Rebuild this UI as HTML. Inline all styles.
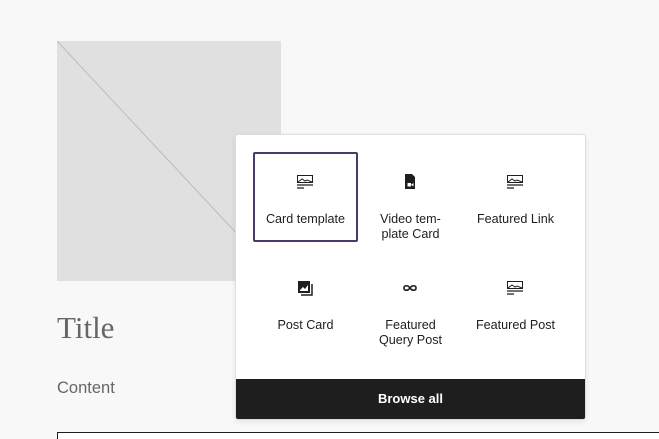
<!DOCTYPE html>
<html style="height:439px;overflow:hidden"><head><style>
body{margin:0;width:659px;height:439px;background:#f8f8f8;position:relative;overflow:hidden;font-family:"Liberation Sans",sans-serif;}
.ph{position:absolute;left:57px;top:41px;width:224px;height:240px;background:#e0e0e0;}
.title{position:absolute;left:57px;top:310px;font-family:"Liberation Serif",serif;font-size:31px;color:#666;}
.content{position:absolute;left:57px;top:379px;font-size:16.5px;color:#666;}
.box{position:absolute;left:57px;top:432px;width:620px;height:20px;border:1px solid #1e1e1e;background:#fff;}
.pop{position:absolute;left:235px;top:134px;width:349px;height:284px;background:#fff;border:1px solid #ddd;border-radius:3px;box-shadow:0 2px 6px rgba(0,0,0,.08);overflow:hidden;}
.cell{position:absolute;width:105px;height:90px;text-align:center;font-size:12.6px;color:#1e1e1e;line-height:15px;box-sizing:border-box;}
.cell svg{position:absolute;left:42px;top:20px;}
.cell span{position:absolute;left:-5px;right:-5px;top:60px;}
.sel{border:2px solid #4d3967;border-radius:2px;}
.bar{position:absolute;left:0;bottom:0;width:100%;height:40px;background:#1e1e1e;color:#fff;font-size:13px;font-weight:bold;text-align:center;line-height:40px;}
</style></head><body>
<div class="ph"><svg width="224" height="240"><line x1="0" y1="0" x2="224" y2="240" stroke="#bbb" stroke-width="1"/></svg></div>
<div class="title">Title</div>
<div class="content">Content</div>
<div class="box"></div>
<div class="pop">
<div class="cell sel" style="left:17px;top:17px"><svg width="20" height="20" viewBox="0 0 20 20" style="left:40px;top:18px"><rect x="2.5" y="3.5" width="15" height="7" fill="none" stroke="#1e1e1e"/><path d="M3 10l4-3 3 2 2-1 5 2" fill="none" stroke="#1e1e1e"/><path d="M2 13h16M2 16h7" stroke="#1e1e1e" stroke-width="1.3"/></svg><span style="top:58px">Card template</span></div>
<div class="cell" style="left:122px;top:17px"><svg width="20" height="20" viewBox="0 0 20 20"><path d="M5 2h7l3 3v12H5z" fill="#1e1e1e"/><rect x="7.5" y="11" width="3.5" height="3.5" fill="#fff"/><path d="M11 12.7l2.5-1.7v3.5z" fill="#fff"/></svg><span>Video tem-<br>plate Card</span></div>
<div class="cell" style="left:227px;top:17px"><svg width="20" height="20" viewBox="0 0 20 20"><rect x="2.5" y="3.5" width="15" height="7" fill="none" stroke="#1e1e1e"/><path d="M3 10l4-3 3 2 2-1 5 2" fill="none" stroke="#1e1e1e"/><path d="M2 13h16M2 16h7" stroke="#1e1e1e" stroke-width="1.3"/></svg><span>Featured Link</span></div>
<div class="cell" style="left:17px;top:123px"><svg width="20" height="20" viewBox="0 0 20 20"><path d="M6 17h11V6" fill="none" stroke="#1e1e1e" stroke-width="1.5"/><rect x="3" y="3" width="12" height="12" fill="#1e1e1e"/><path d="M5 12l3-3 2 2 3-4v6H5z" fill="#fff"/></svg><span>Post Card</span></div>
<div class="cell" style="left:122px;top:123px"><svg width="20" height="20" viewBox="0 0 20 20"><path d="M10 10c-2-3-6-3-6 0s4 3 6 0 6-3 6 0-4 3-6 0" fill="none" stroke="#1e1e1e" stroke-width="1.6"/></svg><span>Featured<br>Query Post</span></div>
<div class="cell" style="left:227px;top:123px"><svg width="20" height="20" viewBox="0 0 20 20"><rect x="2.5" y="3.5" width="15" height="7" fill="none" stroke="#1e1e1e"/><path d="M3 10l4-3 3 2 2-1 5 2" fill="none" stroke="#1e1e1e"/><path d="M2 13h16M2 16h7" stroke="#1e1e1e" stroke-width="1.3"/></svg><span>Featured Post</span></div>
<div class="bar">Browse all</div>
</div>
</body></html>
